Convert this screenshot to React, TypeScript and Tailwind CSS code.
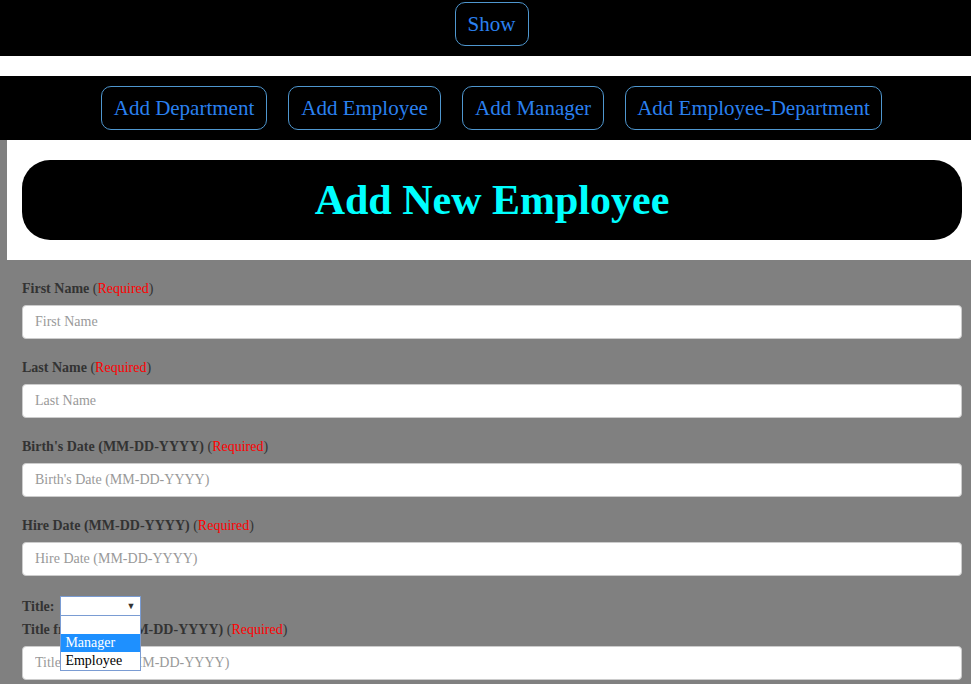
import React from 'react';

const serif = { fontFamily: '"Liberation Serif", "Times New Roman", serif' };

const NavButton: React.FC<{ label: string; width: string }> = ({ label, width }) => (
    <button className={`${width} h-[44px] rounded-[10px] border border-[#4f97cf] bg-black text-[#2a80f0] text-[21px] leading-none whitespace-nowrap`}>
        {label}
    </button>
);

const Field: React.FC<{ label: string; placeholder: string }> = ({ label, placeholder }) => (
    <div className="mb-[19px]">
        <p className="h-[20px] leading-[20px] text-[14px] text-[#333] mb-[6px]">
            <span className="font-bold">{label}</span> (<span className="text-[#ff0000]">Required</span>)
        </p>
        <input
            placeholder={placeholder}
            className="w-full h-[34px] px-[12px] bg-white rounded-[4px] border border-[#ccc] text-[14px] text-[#555] placeholder:text-[#999] outline-none"
            style={serif}
        />
    </div>
);

const TitleSelect: React.FC = () => (
    <div className="relative inline-block ml-[6px]">
        <div className="w-[81px] h-[20px] bg-white border border-[#7a9cd3] flex items-center justify-end pr-[5px]">
            <span className="text-[9px] text-[#333] leading-none">▼</span>
        </div>
        <div className="absolute left-0 top-[19px] w-[81px] bg-white border border-[#7a9cd3] z-10 text-[14px] leading-[18px]">
            <div className="h-[18px]"></div>
            <div className="h-[18px] px-[4px] bg-[#1e90ff] text-white">Manager</div>
            <div className="h-[18px] px-[4px] text-black">Employee</div>
        </div>
    </div>
);

export default function App() {
    return (
        <div className="w-[971px] min-h-[684px] bg-[#808080]" style={serif}>
            <div className="h-[56px] bg-black flex justify-center pl-[12px] pt-[2px]">
                <NavButton label="Show" width="w-[74px]" />
            </div>
            <div className="h-[20px] bg-white"></div>
            <div className="h-[64px] bg-black flex justify-center items-start pt-[10px] pl-[12px] gap-[21px]">
                <NavButton label="Add Department" width="w-[166px]" />
                <NavButton label="Add Employee" width="w-[153px]" />
                <NavButton label="Add Manager" width="w-[142px]" />
                <NavButton label="Add Employee-Department" width="w-[257px]" />
            </div>
            <div className="ml-[7px] bg-white h-[120px] pt-[20px] pl-[15px] pr-[9px]">
                <div className="h-[80px] bg-black rounded-[28px] flex items-center justify-center">
                    <h1 className="text-[42px] font-bold text-[#00ffff] leading-none">Add New Employee</h1>
                </div>
            </div>
            <div className="px-[22px] pt-[19px] pr-[9px]">
                <Field label="First Name" placeholder="First Name" />
                <Field label="Last Name" placeholder="Last Name" />
                <Field label="Birth's Date (MM-DD-YYYY)" placeholder="Birth's Date (MM-DD-YYYY)" />
                <Field label="Hire Date (MM-DD-YYYY)" placeholder="Hire Date (MM-DD-YYYY)" />
                <div className="flex items-center h-[22px] mb-[3px] text-[14px] text-[#333]">
                    <span className="font-bold">Title:</span>
                    <TitleSelect />
                </div>
                <Field label="Title from Date (MM-DD-YYYY)" placeholder="Title from Date (MM-DD-YYYY)" />
            </div>
        </div>
    );
}
